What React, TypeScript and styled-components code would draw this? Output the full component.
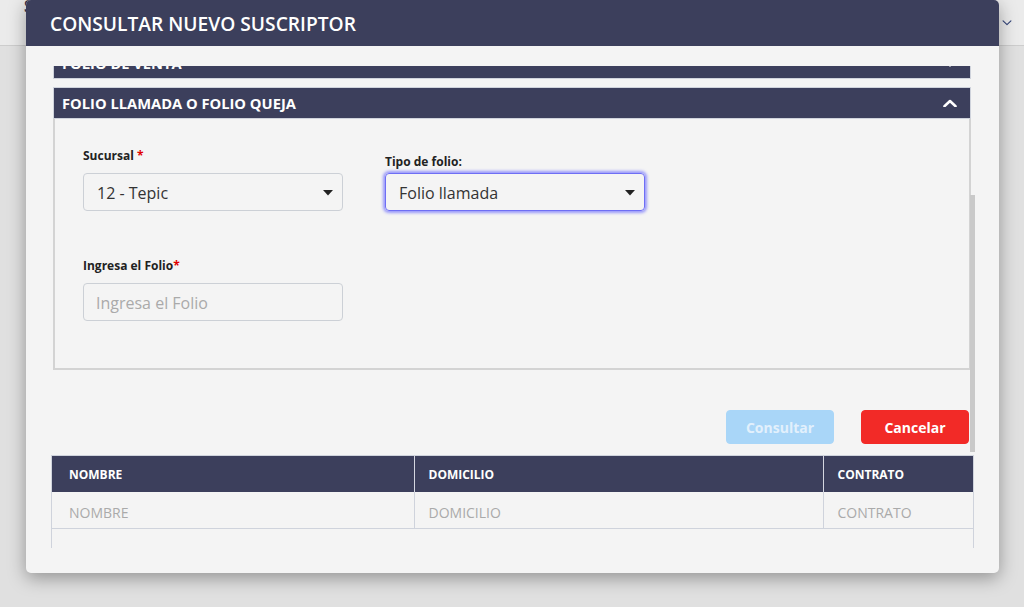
import { useLayoutEffect, useRef, useState } from 'react';
import styled, { createGlobalStyle } from 'styled-components';

const GlobalStyle = createGlobalStyle`
  html, body {
    margin: 0;
    padding: 0;
  }
  body {
    font-family: "Open Sans", "Noto Sans", sans-serif;
    background: #dfdfdf;
  }
  * {
    box-sizing: border-box;
  }
`;

const Page = styled.div`
  position: relative;
  width: 1024px;
  height: 607px;
  overflow: hidden;
  background: #e0e0e0;
`;

const TopBar = styled.div`
  height: 46px;
  background: #ebebeb;
  border-bottom: 1px solid #cdcdcd;
  display: flex;
  align-items: flex-start;
  justify-content: space-between;
  padding: 0 12px 0 24px;
`;

const Brand = styled.span`
  font-size: 16px;
  font-weight: 700;
  color: #2d3450;
  line-height: 16px;
  margin-top: -2px;
`;

const UserMenu = styled.span`
  display: flex;
  align-items: center;
  height: 46px;
  color: #34457a;
`;

const Modal = styled.div`
  position: absolute;
  left: 26px;
  top: 0;
  width: 973px;
  height: 573px;
  background: #f4f4f4;
  border-radius: 5px;
  box-shadow: 0 5px 18px rgba(0, 0, 0, 0.35);
  display: flex;
  flex-direction: column;
  overflow: hidden;
`;

const ModalHeader = styled.div`
  height: 46px;
  flex: none;
  background: #3c3f5c;
  color: #fff;
  display: flex;
  align-items: center;
  padding: 1px 0 0 24px;
  font-size: 19.2px;
  font-weight: 600;
`;

const ModalBody = styled.div`
  flex: 1;
  min-height: 0;
  padding: 20px 24px 25px 25px;
  display: flex;
  flex-direction: column;
`;

const ScrollFrame = styled.div`
  position: relative;
  height: 386px;
  flex: none;
`;

const ScrollArea = styled.div`
  height: 100%;
  overflow-y: auto;
  padding: 14px 4px 8px 2px;
  scrollbar-width: none;

  &::-webkit-scrollbar {
    display: none;
  }
`;

const ScrollThumb = styled.div`
  position: absolute;
  right: 0;
  width: 5px;
  background: #c9c9c9;
`;

const Section = styled.div`
  & + & {
    margin-top: 8px;
  }
`;

const SectionHeader = styled.div`
  height: 32px;
  background: #3c3f5c;
  border: 1px solid #cfd3dc;
  color: #fff;
  font-weight: 700;
  font-size: 14.7px;
  display: flex;
  align-items: center;
  justify-content: space-between;
  padding: 0 13px 0 8px;
  text-transform: uppercase;
`;

const SectionPanel = styled.div`
  border: 2px solid #d3d3d3;
  border-top: none;
  padding: 28px 28px 47px;
`;

const FormGrid = styled.div`
  display: grid;
  grid-template-columns: 260px 260px;
  column-gap: 42px;
  row-gap: 46px;
  align-items: end;
`;

const Field = styled.div`
  display: flex;
  flex-direction: column;
`;

const Label = styled.label<{ $gap?: number }>`
  font-size: 12px;
  font-weight: 700;
  color: #222;
  line-height: 17px;
  margin-bottom: ${(p) => p.$gap ?? 9}px;
`;

const Required = styled.span`
  color: #e00000;
`;

const SelectBox = styled.div<{ $focused?: boolean }>`
  height: 38px;
  border: 1px solid ${(p) => (p.$focused ? '#6e6ef4' : '#ccd0d6')};
  border-radius: 4px;
  box-shadow: ${(p) => (p.$focused ? '0 0 3px 2px rgba(92, 92, 255, 0.6)' : 'none')};
  display: flex;
  align-items: center;
  justify-content: space-between;
  padding: 1px 9px 0 13px;
  font-size: 16px;
  color: #333;
`;

const TextInput = styled.input`
  height: 38px;
  width: 100%;
  border: 1px solid #ccd0d6;
  border-radius: 4px;
  background: transparent;
  padding: 2px 12px 0;
  font-family: inherit;
  font-size: 16px;
  color: #333;
  outline: none;

  &::placeholder {
    color: #aaa;
  }
`;

const Actions = styled.div`
  display: flex;
  justify-content: flex-end;
  gap: 27px;
  margin-top: 40px;
  padding-right: 2px;
`;

const ActionButton = styled.button<{ $variant: 'primary' | 'danger' }>`
  width: 108px;
  height: 34px;
  border-radius: 4px;
  border: 1px solid ${(p) => (p.$variant === 'primary' ? '#a9d6f8' : '#f22a27')};
  background: ${(p) => (p.$variant === 'primary' ? '#a9d6f8' : '#f22a27')};
  color: ${(p) => (p.$variant === 'primary' ? '#e2f0fc' : '#fff')};
  font-family: inherit;
  font-size: 14px;
  font-weight: 700;
  padding: 1px 0 0;
  cursor: pointer;
`;

const TableWrap = styled.div`
  margin-top: 3px;
  flex: 1;
  min-height: 0;
  width: 923px;
  overflow: hidden;
  border-left: 1px solid #cfd3dc;
  border-right: 1px solid #cfd3dc;
  border-top: 1px solid #cfd3dc;
`;

const Table = styled.table`
  width: 100%;
  border-collapse: collapse;
  table-layout: fixed;
`;

const HeadCell = styled.th`
  height: 36px;
  background: #3c3f5c;
  color: #fff;
  font-size: 12px;
  font-weight: 700;
  text-align: left;
  padding: 0 14px;
  border-right: 1px solid #d4d6e0;

  &:first-child {
    padding-left: 17px;
  }
  &:last-child {
    border-right: none;
  }
`;

const Cell = styled.td`
  height: 36px;
  color: #aaa;
  font-size: 14px;
  padding: 5px 14px 0;
  border-bottom: 1px solid #cfd3dc;
  border-right: 1px solid #cfd3dc;

  &:first-child {
    padding-left: 17px;
  }
  &:last-child {
    border-right: none;
  }
`;

const Chevron = ({ up, size = 14, color = '#fff', stroke = 2.6 }: { up?: boolean; size?: number; color?: string; stroke?: number }) => (
  <svg width={size} height={size * 0.6} viewBox="0 0 14 8" fill="none">
    <polyline
      points={up ? '1.5,7 7,1.8 12.5,7' : '1.5,1 7,6.2 12.5,1'}
      stroke={color}
      strokeWidth={stroke}
      strokeLinecap="round"
      strokeLinejoin="round"
    />
  </svg>
);

const Caret = () => (
  <svg width="10" height="6" viewBox="0 0 10 6">
    <polygon points="0,0 10,0 5,5.5" fill="#222" />
  </svg>
);

const collapsed = ['Número de contrato', 'Nombre del suscriptor', 'Domicilio', 'Teléfono', 'Folio de venta'];
const columns = [
  { key: 'NOMBRE', width: 362 },
  { key: 'DOMICILIO', width: 409 },
  { key: 'CONTRATO', width: 150 },
];

const App = () => {
  const scrollRef = useRef<HTMLDivElement>(null);
  const [thumb, setThumb] = useState({ top: 0, height: 0 });

  useLayoutEffect(() => {
    const el = scrollRef.current;
    if (!el) return;
    el.scrollTop = el.scrollHeight;
    const ratio = el.clientHeight / el.scrollHeight;
    setThumb({ top: el.scrollTop * ratio, height: el.clientHeight * ratio });
  }, []);

  return (
    <Page>
      <GlobalStyle />
      <TopBar>
        <Brand>SKY</Brand>
        <UserMenu>
          <Chevron size={10} color="#34457a" stroke={1.6} />
        </UserMenu>
      </TopBar>

      <Modal>
        <ModalHeader>CONSULTAR NUEVO SUSCRIPTOR</ModalHeader>
        <ModalBody>
          <ScrollFrame>
            <ScrollArea ref={scrollRef}>
              {collapsed.map((title) => (
                <Section key={title}>
                  <SectionHeader>
                    {title}
                    <Chevron />
                  </SectionHeader>
                </Section>
              ))}
              <Section>
                <SectionHeader>
                  Folio llamada o folio queja
                  <Chevron up />
                </SectionHeader>
                <SectionPanel>
                  <FormGrid>
                    <Field>
                      <Label>
                        Sucursal <Required>*</Required>
                      </Label>
                      <SelectBox>
                        12 - Tepic
                        <Caret />
                      </SelectBox>
                    </Field>
                    <Field>
                      <Label $gap={3}>Tipo de folio:</Label>
                      <SelectBox $focused>
                        Folio llamada
                        <Caret />
                      </SelectBox>
                    </Field>
                    <Field>
                      <Label>
                        Ingresa el Folio<Required>*</Required>
                      </Label>
                      <TextInput placeholder="Ingresa el Folio" />
                    </Field>
                  </FormGrid>
                </SectionPanel>
              </Section>
              <Actions>
                <ActionButton $variant="primary" disabled>
                  Consultar
                </ActionButton>
                <ActionButton $variant="danger">Cancelar</ActionButton>
              </Actions>
            </ScrollArea>
            <ScrollThumb style={{ top: thumb.top, height: thumb.height }} />
          </ScrollFrame>

          <TableWrap>
            <Table>
              <colgroup>
                {columns.map((c) => (
                  <col key={c.key} style={{ width: c.width }} />
                ))}
              </colgroup>
              <thead>
                <tr>
                  {columns.map((c) => (
                    <HeadCell key={c.key}>{c.key}</HeadCell>
                  ))}
                </tr>
              </thead>
              <tbody>
                <tr>
                  {columns.map((c) => (
                    <Cell key={c.key}>{c.key}</Cell>
                  ))}
                </tr>
              </tbody>
            </Table>
          </TableWrap>
        </ModalBody>
      </Modal>
    </Page>
  );
};

export default App;
